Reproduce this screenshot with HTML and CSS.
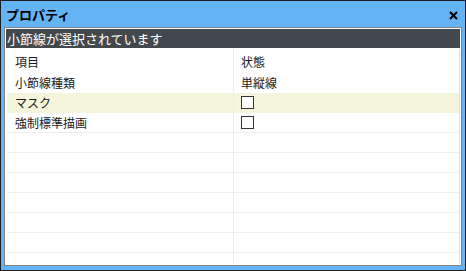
FILE: index.html
```html
<!DOCTYPE html>
<html lang="ja">

<head>
    <meta charset="UTF-8">
    <meta name="viewport" content="width=device-width, initial-scale=1.0">
    <title>プロパティ</title>
    <link rel="stylesheet" href="styles.css">
</head>

<body>
    <div class="window">
        <div class="titlebar">
            <span class="title">プロパティ</span>
            <span class="close">
                <svg width="9" height="9" viewBox="0 0 9 9">
                    <path d="M1 1 L8 8 M8 1 L1 8" stroke="#000" stroke-width="2" fill="none" />
                </svg>
            </span>
        </div>
        <div class="panel">
            <div class="info">小節線が選択されています</div>
            <div class="grid">
                <div class="row head">
                    <div class="cell name">項目</div>
                    <div class="cell value">状態</div>
                </div>
                <div class="row">
                    <div class="cell name">小節線種類</div>
                    <div class="cell value">単縦線</div>
                </div>
                <div class="row selected">
                    <div class="cell name">マスク</div>
                    <div class="cell value"><span class="check"></span></div>
                </div>
                <div class="row">
                    <div class="cell name">強制標準描画</div>
                    <div class="cell value"><span class="check"></span></div>
                </div>
                <div class="row"><div class="cell name"></div><div class="cell value"></div></div>
                <div class="row"><div class="cell name"></div><div class="cell value"></div></div>
                <div class="row"><div class="cell name"></div><div class="cell value"></div></div>
                <div class="row"><div class="cell name"></div><div class="cell value"></div></div>
                <div class="row"><div class="cell name"></div><div class="cell value"></div></div>
                <div class="row"><div class="cell name"></div><div class="cell value"></div></div>
                <div class="row"><div class="cell name"></div><div class="cell value"></div></div>
            </div>
        </div>
    </div>
</body>

</html>
```

FILE: styles.css
```css
* {
    margin: 0;
    padding: 0;
    box-sizing: border-box;
}

body {
    width: 466px;
    height: 271px;
    overflow: hidden;
    font-family: "Noto Sans CJK JP", "Noto Sans", sans-serif;
    font-size: 12px;
    color: #1a1a1a;
}

.window {
    width: 466px;
    height: 271px;
    border: 1px solid #1e1e1e;
    background: #64b4f5;
    padding: 0 3px 4px 3px;
    display: flex;
    flex-direction: column;
}

.titlebar {
    height: 26px;
    display: flex;
    align-items: center;
    justify-content: space-between;
    padding: 1px 4px 0 2px;
}

.title {
    font-size: 13px;
    font-weight: bold;
    color: #000;
}

.close {
    display: flex;
    margin-top: 2px;
}

.panel {
    flex: 1;
    border: 1px solid #828282;
    background: #fff;
    padding: 1px;
    display: flex;
    flex-direction: column;
    overflow: hidden;
}

.info {
    height: 19px;
    line-height: 19px;
    background: #43484c;
    color: #fff;
    font-size: 13px;
    padding-left: 1px;
}

.grid {
    flex: 1;
    margin-top: 1px;
    margin-left: 1px;
    border-right: 1px solid #e2e2e2;
    overflow: hidden;
}

.row {
    display: flex;
    height: 20px;
    border-bottom: 1px solid #efefef;
}

.row.head {
    height: 24px;
    border-bottom: none;
}

.row.selected {
    background: #f5f4dc;
    border-bottom-color: #f5f4dc;
}

.row.head + .row,
.row.head + .row + .row {
    border-bottom-color: transparent;
}

.row.head + .row + .row {
    border-bottom-color: #f5f4dc;
}

.cell {
    display: flex;
    align-items: center;
    white-space: nowrap;
}

.cell.name {
    width: 227px;
    padding-left: 8px;
    border-right: 1px solid #ececec;
}

.cell.value {
    flex: 1;
    padding-left: 7px;
}

.check {
    display: block;
    width: 13px;
    height: 13px;
    border: 1px solid #333;
    background: #fff;
}
```
